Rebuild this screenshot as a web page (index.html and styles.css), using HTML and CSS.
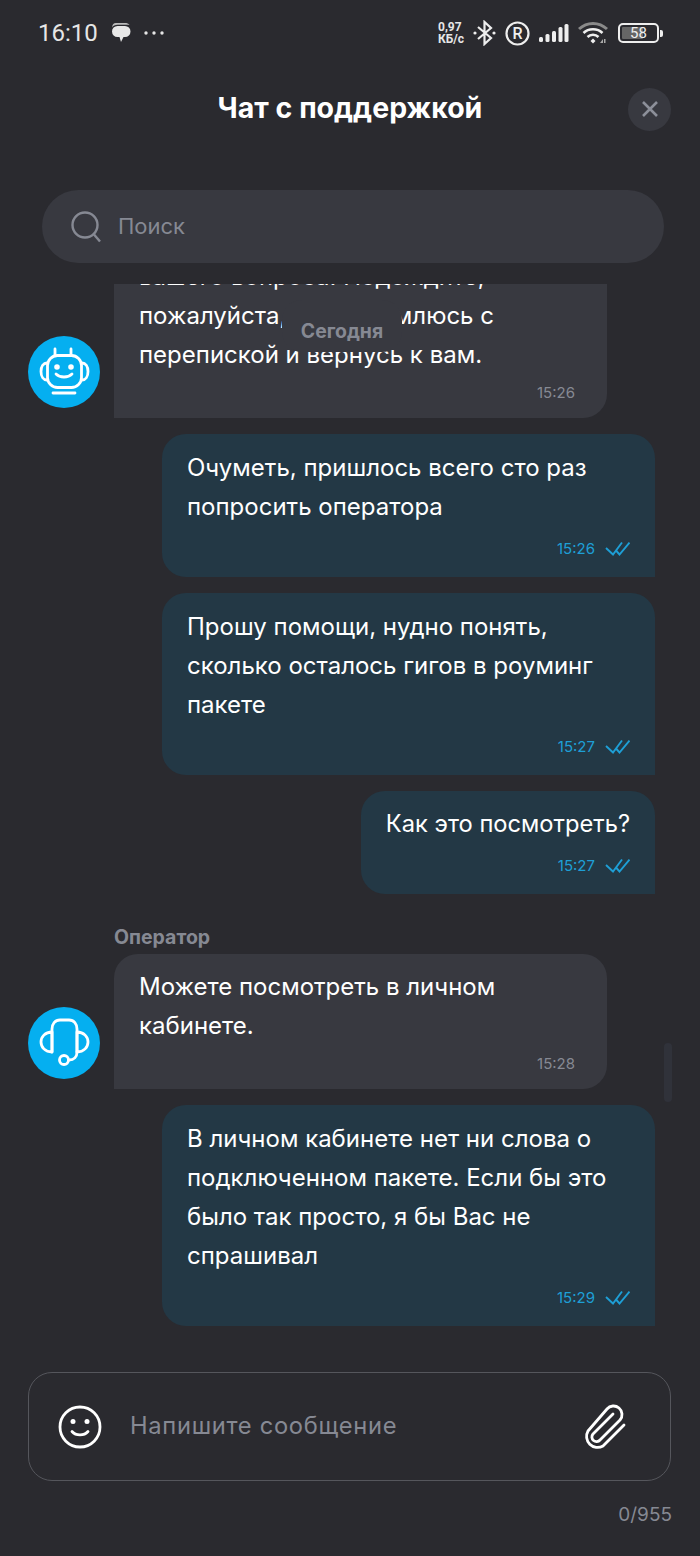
FILE: index.html
```html
<!DOCTYPE html>
<html lang="ru">
<head>
<meta name="viewport" content="width=device-width, initial-scale=1.0">
<link rel="stylesheet" href="styles.css">
<title>Чат с поддержкой</title>
</head>
<body>
  <div class="status-bar">
    <div class="status-left">
      <span class="clock">16:10</span>
      <svg width="20" height="22" viewBox="0 0 20 22"><path d="M5 1h9c2 0 3.500.6 4.500 1.800H6.500C4 2.800 2 3.800 1.200 5.500 1 3 2.500 1 5 1z" fill="#bbb"/><path d="M6.500 4h7.500a5.500 5.500 0 0 1 0 11h-1.500L10 20l-1.500-5h-2a5.500 5.500 0 0 1 0-11z" fill="#e8e8e8"/></svg>
      <svg width="20" height="4" viewBox="0 0 20 4" fill="#e6e6e6"><circle cx="2" cy="2" r="1.700"/><circle cx="10" cy="2" r="1.700"/><circle cx="18" cy="2" r="1.700"/></svg>
    </div>
    <div class="status-right">
      <div class="net-speed"><span>0,97</span><span>КБ/с</span></div>
      <svg width="23" height="26" viewBox="0 0 23 26" fill="none" stroke="#eee" stroke-width="2.200"><path d="M5 7l13 11-6.500 6V2L18 8 5 19"/><circle cx="2" cy="13" r="1.600" fill="#eee" stroke="none"/><circle cx="21" cy="13" r="1.600" fill="#eee" stroke="none"/></svg>
      <svg width="25" height="25" viewBox="0 0 25 25"><circle cx="12.500" cy="12.500" r="11" fill="none" stroke="#eee" stroke-width="2.200"/><text x="12.500" y="18" text-anchor="middle" class="r-letter">R</text></svg>
      <svg width="30" height="20" viewBox="0 0 30 20" fill="#eee"><rect x="0" y="14" width="4" height="5" rx="1.500"/><rect x="6.500" y="11" width="4" height="8" rx="1.500"/><rect x="13" y="8" width="4" height="11" rx="1.500"/><rect x="19.500" y="4" width="4" height="15" rx="1.500"/><rect x="25.500" y="1" width="4" height="18" rx="1.500"/></svg>
      <svg class="wifi" width="30" height="24" viewBox="0 0 30 24" fill="none"><path d="M1 8c8-7.500 20-7.500 28 0" stroke="#8a8a8a" stroke-width="3"/><path d="M5.500 12c5-5 14-5 19 0" stroke="#eee" stroke-width="2.500"/><path d="M9.500 16c3-3 8-3 11 0" stroke="#eee" stroke-width="2.500"/><path d="M12.500 20l2.500-2.500 2.500 2.500-2.500 2.500z" fill="#eee"/><path d="M22 22l3-4v4zM26 18h1.500v4H26z" fill="#aaa"/></svg>
      <div class="battery"><div class="battery-box"><div class="battery-fill"></div><span>58</span></div><div class="battery-cap"></div></div>
    </div>
  </div>

  <div class="header">
    <h1>Чат с поддержкой</h1>
    <div class="close-btn">
      <svg width="18" height="18" viewBox="0 0 18 18" stroke="#8c8f99" stroke-width="2.600" fill="none"><path d="M2 2l14 14M16 2L2 16"/></svg>
    </div>
  </div>

  <div class="search">
    <svg width="32" height="34" viewBox="0 0 32 34" fill="none" stroke="#868993" stroke-width="2.400"><circle cx="15" cy="15" r="12.500"/><path d="M24 24.500l6 7"/></svg>
    <span>Поиск</span>
  </div>

  <div class="chat">
    <div class="today">Сегодня</div>

    <div class="msg-row in">
      <div class="avatar">
        <svg width="52" height="52" viewBox="0 0 52 52" fill="none" stroke="#fff" stroke-width="2.800" stroke-linecap="round" stroke-linejoin="round"><rect x="9.500" y="9.500" width="34" height="32" rx="10"/><path d="M9 17c-3.500 0-6 3.500-6 8.500S5.500 34 9 34M44 17c3.500 0 6 3.500 6 8.500S47.500 34 44 34M17 9V3M33 9V3M15 47h22"/><path d="M18 28c4 4 12 4 16 0"/><circle cx="19" cy="21" r="1.400" fill="#fff"/><circle cx="33" cy="21" r="1.400" fill="#fff"/></svg>
      </div>
      <div class="bubble">
        <div class="text">вашего вопроса. Подождите,<br>пожалуйста, я ознакомлюсь с<br>перепиской и вернусь к вам.</div>
        <div class="meta"><span class="time">15:26</span></div>
      </div>
    </div>

    <div class="msg-row out">
      <div class="bubble">
        <div class="text">Очуметь, пришлось всего сто раз<br>попросить оператора</div>
        <div class="meta"><span class="time">15:26</span>
          <svg width="25" height="15" viewBox="0 0 25 15" fill="none" stroke="#1e9fd6" stroke-width="1.900"><path d="M1 7l7 6.500L17 1.500M11 9.500l3.500 4L24.500 1.500"/></svg>
        </div>
      </div>
    </div>

    <div class="msg-row out">
      <div class="bubble">
        <div class="text">Прошу помощи, нудно понять,<br>сколько осталось гигов в роуминг<br>пакете</div>
        <div class="meta"><span class="time">15:27</span>
          <svg width="25" height="15" viewBox="0 0 25 15" fill="none" stroke="#1e9fd6" stroke-width="1.900"><path d="M1 7l7 6.500L17 1.500M11 9.500l3.500 4L24.500 1.500"/></svg>
        </div>
      </div>
    </div>

    <div class="msg-row out">
      <div class="bubble single">
        <div class="text">Как это посмотреть?</div>
        <div class="meta"><span class="time">15:27</span>
          <svg width="25" height="15" viewBox="0 0 25 15" fill="none" stroke="#1e9fd6" stroke-width="1.900"><path d="M1 7l7 6.500L17 1.500M11 9.500l3.500 4L24.500 1.500"/></svg>
        </div>
      </div>
    </div>

    <div class="sender">Оператор</div>
    <div class="msg-row in">
      <div class="avatar">
        <svg width="52" height="52" viewBox="0 0 52 52" fill="none" stroke="#fff" stroke-width="2.800" stroke-linecap="round" stroke-linejoin="round"><path d="M14 35V12c0-5 3-9 8-9h9c5 0 8 4 8 9v23"/><path d="M14 15C7 15 3 20 3 25s4 10 11 10zM39 15c7 0 11 5 11 10s-4 10-11 10z"/><path d="M39 35c0 5-3 8-8 8"/><circle cx="26" cy="43" r="4.500"/></svg>
      </div>
      <div class="bubble">
        <div class="text">Можете посмотреть в личном<br>кабинете.</div>
        <div class="meta"><span class="time">15:28</span></div>
      </div>
    </div>

    <div class="msg-row out">
      <div class="bubble">
        <div class="text">В личном кабинете нет ни слова о<br>подключенном пакете. Если бы это<br>было так просто, я бы Вас не<br>спрашивал</div>
        <div class="meta"><span class="time">15:29</span>
          <svg width="25" height="15" viewBox="0 0 25 15" fill="none" stroke="#1e9fd6" stroke-width="1.900"><path d="M1 7l7 6.500L17 1.500M11 9.500l3.500 4L24.500 1.500"/></svg>
        </div>
      </div>
    </div>

    <div class="scroll-thumb"></div>
  </div>

  <div class="composer">
    <svg width="44" height="44" viewBox="0 0 44 44" fill="none" stroke="#fff" stroke-width="2.800" stroke-linecap="round"><circle cx="22" cy="22" r="20"/><path d="M14 26.500c4 4.500 12 4.500 16 0"/><circle cx="15" cy="16.500" r="2.500" fill="#fff" stroke="none"/><circle cx="29" cy="16.500" r="2.500" fill="#fff" stroke="none"/></svg>
    <span class="placeholder">Напишите сообщение</span>
    <svg width="44" height="46" viewBox="0 0 44 46" fill="none" stroke="#fff" stroke-width="2.800" stroke-linecap="round" stroke-linejoin="round"><path d="M41 21L20 42A11 11 0 0 1 5 27L24 5A8.500 8.500 0 0 1 37 16L17 36A4.600 4.600 0 0 1 10 30L30 10"/></svg>
  </div>
  <div class="counter">0/955</div>
</body>
</html>
```
FILE: styles.css
```css
* {
  box-sizing: border-box;
}
body {
  margin: 0;
  width: 700px;
  height: 1556px;
  overflow: hidden;
  background: #2a2a2f;
  color: #fff;
  font-family: Inter, "Noto Sans", sans-serif;
}

/* status bar */
.status-bar {
  height: 64px;
  padding: 2px 37px 0 38px;
  display: flex;
  justify-content: space-between;
  align-items: center;
}
.status-left {
  display: flex;
  align-items: center;
  gap: 13px;
}
.clock {
  font-family: Roboto, sans-serif;
  font-size: 24px;
  color: #e6e6e6;
}
.status-right {
  display: flex;
  align-items: center;
  gap: 9px;
}
.status-right .wifi {
  margin-right: 1px;
}
.net-speed {
  display: flex;
  flex-direction: column;
  font-family: Roboto, sans-serif;
  font-size: 12px;
  font-weight: 700;
  line-height: 12px;
  color: #e6e6e6;
}
.r-letter {
  font-family: Roboto, sans-serif;
  font-size: 16px;
  font-weight: 500;
  fill: #eee;
}
.battery {
  display: flex;
  align-items: center;
  gap: 1px;
}
.battery-box {
  position: relative;
  width: 41px;
  height: 20px;
  border: 2px solid #eee;
  border-radius: 5px;
  font-family: Roboto, sans-serif;
  font-size: 15px;
  line-height: 16px;
  text-align: center;
  color: #eee;
}
.battery-fill {
  position: absolute;
  left: 2px;
  top: 2px;
  bottom: 2px;
  width: 21px;
  background: #666;
  border-radius: 1px;
}
.battery-box span {
  position: relative;
}
.battery-cap {
  width: 3px;
  height: 7px;
  background: #eee;
  border-radius: 0 2px 2px 0;
}

/* header */
.header {
  height: 90px;
  margin-bottom: 36px;
  padding: 0 29px;
  display: flex;
  align-items: center;
  justify-content: flex-end;
  position: relative;
}
.header h1 {
  position: absolute;
  left: 0;
  right: 0;
  margin: 0;
  padding-bottom: 4px;
  text-align: center;
  font-size: 28.500px;
  font-weight: 700;
}
.close-btn {
  width: 43px;
  height: 43px;
  border-radius: 50%;
  background: #383940;
  display: flex;
  align-items: center;
  justify-content: center;
}

/* search */
.search {
  height: 73px;
  margin: 0 36px 0 42px;
  padding: 0 28px;
  background: #383940;
  border-radius: 37px;
  display: flex;
  align-items: center;
  gap: 16px;
  font-size: 22px;
  color: #868993;
}
.search span {
  padding-bottom: 2px;
}

/* messages, anchored to the bottom and clipped at the top */
.chat {
  position: relative;
  height: 1056px;
  margin-top: 21px;
  padding-bottom: 14px;
  overflow: hidden;
  display: flex;
  flex-direction: column;
  justify-content: flex-end;
  gap: 16px;
}
.today {
  position: absolute;
  top: 16px;
  left: 282px;
  width: 120px;
  height: 52px;
  padding-top: 18px;
  background: #383940;
  border-radius: 20px;
  text-align: center;
  font-size: 19.400px;
  font-weight: 700;
  line-height: 26px;
  color: #868993;
}
.msg-row {
  display: flex;
  flex-shrink: 0;
  align-items: flex-end;
}
.msg-row.out {
  justify-content: flex-end;
  padding-right: 45px;
}
.msg-row.in {
  padding-left: 28px;
  gap: 14px;
}
.bubble {
  width: 493px;
  font-size: 24px;
  line-height: 39px;
}
.in .bubble {
  padding: 13px 25px 12px;
  background: #383940;
  border-radius: 24px 24px 24px 0;
}
.out .bubble {
  padding: 14px 25px 15px;
  background: #233845;
  border-radius: 24px 24px 0 24px;
}
.out .bubble.single {
  width: auto;
  padding-top: 13px;
  font-size: 23.700px;
}
.meta {
  display: flex;
  justify-content: flex-end;
  align-items: center;
  gap: 10px;
  height: 28px;
  margin-top: 8px;
  font-size: 15px;
}
.in .meta {
  margin-top: 4px;
  padding-right: 7px;
}
.in .time {
  color: #868993;
}
.out .time {
  color: #1e9fd6;
}
.avatar {
  width: 72px;
  height: 72px;
  margin-bottom: 10px;
  flex-shrink: 0;
  border-radius: 50%;
  background: #05aff0;
  display: flex;
  align-items: center;
  justify-content: center;
}
.sender {
  flex-shrink: 0;
  margin: 15px 0 -11px 114px;
  font-size: 19.500px;
  font-weight: 700;
  line-height: 24px;
  color: #868993;
}
.scroll-thumb {
  position: absolute;
  right: 28px;
  bottom: 238px;
  width: 8px;
  height: 59px;
  border-radius: 4px;
  background: #30323a;
}

/* composer */
.composer {
  height: 109px;
  margin: 32px 29px 0 28px;
  padding: 0 43px 0 29px;
  border: 1px solid #55565c;
  border-radius: 24px;
  display: flex;
  align-items: center;
  gap: 28px;
  font-size: 23.700px;
  letter-spacing: 0.7px;
  color: #868993;
}
.placeholder {
  flex: 1;
  padding-bottom: 2px;
}
.counter {
  margin: 22px 28px 0 0;
  text-align: right;
  font-size: 19px;
  color: #868993;
}
```
